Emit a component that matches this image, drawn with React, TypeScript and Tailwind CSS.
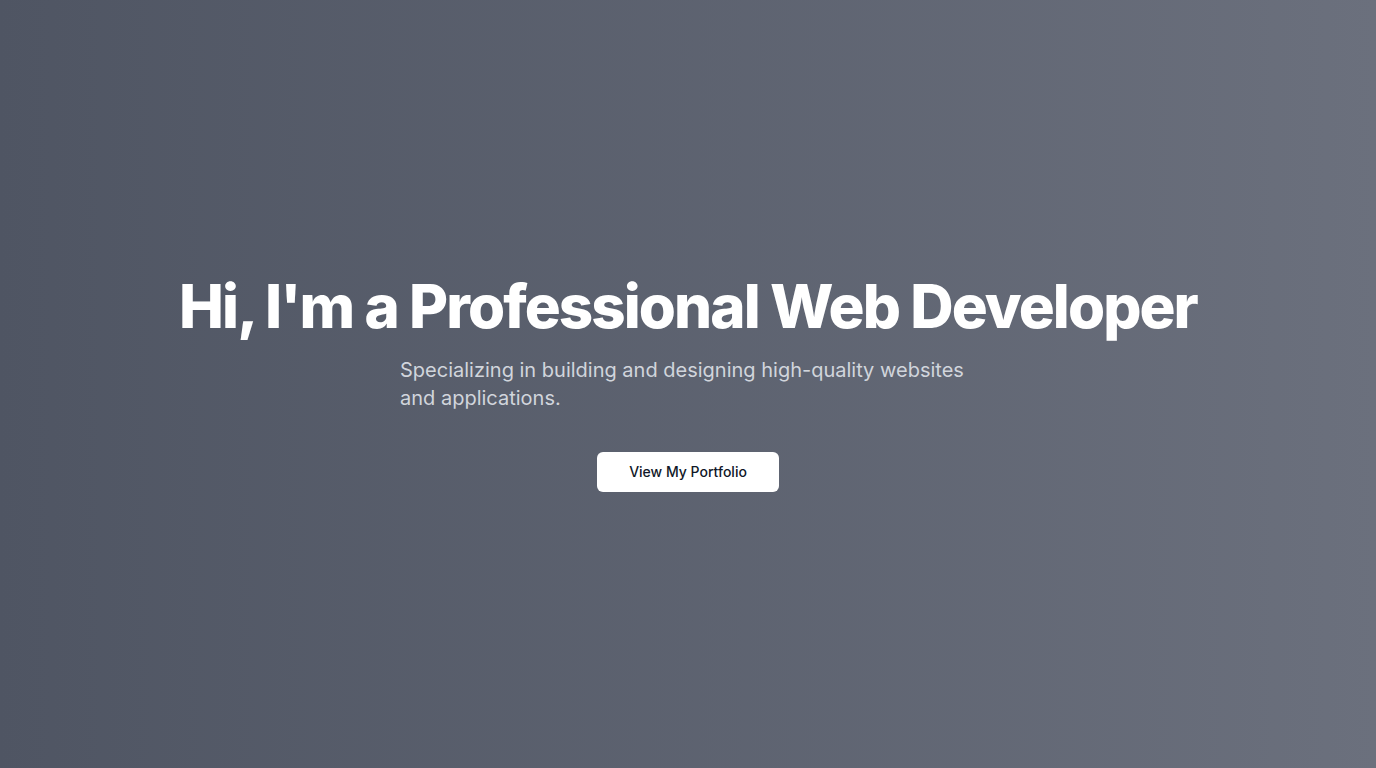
const App = () => {
  return (
    <div className="min-h-screen w-full flex flex-col justify-center items-center bg-linear-to-r from-[#4f5563] to-[#6b707d] text-white font-[Inter,'Liberation_Sans',sans-serif]">
      <h1 className="text-6xl leading-none font-extrabold tracking-[-0.032em] text-center">
        Hi, I'm a Professional Web Developer
      </h1>
      <p className="mt-5 max-w-xl w-full text-xl text-gray-300">
        Specializing in building and designing high-quality websites and applications.
      </p>
      <button
        type="button"
        className="mt-10 px-8 py-2.5 bg-white text-gray-900 text-sm font-medium rounded-md cursor-pointer"
      >
        View My Portfolio
      </button>
    </div>
  )
}

export default App
